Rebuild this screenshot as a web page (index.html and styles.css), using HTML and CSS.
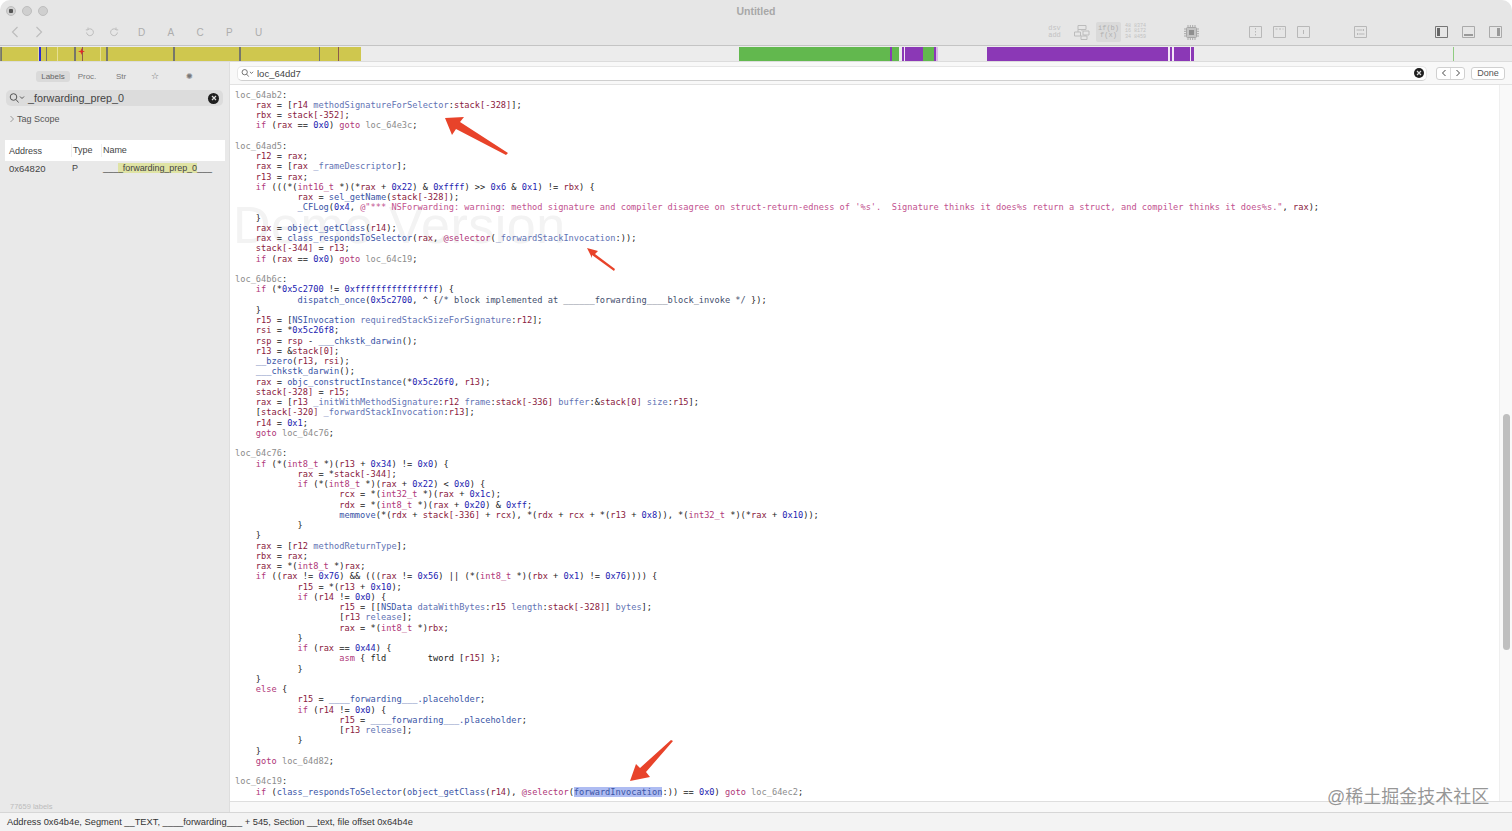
FILE: index.html
```html
<!DOCTYPE html>
<html lang="en">
<head>
  <meta charset="UTF-8">
  <title>Untitled</title>
  <link rel="stylesheet" href="styles.css">
</head>
<body>
<div class="app">
  <div class="titlebar">
    <div class="lights"><i class="light first"></i><i class="light"></i><i class="light"></i></div>
    <div class="title">Untitled</div>
  </div>

  <div class="toolbar">
    <div class="tool nav"><svg width="10" height="12" viewBox="0 0 10 12"><path d="M7.5 1 2.5 6l5 5"/></svg></div>
    <div class="tool nav"><svg width="10" height="12" viewBox="0 0 10 12"><path d="M2.5 1l5 5-5 5"/></svg></div>
    <div class="tool undo"><svg width="10" height="10" viewBox="0 0 10 10"><path d="M3 2.5A3.4 3.4 0 1 1 1.6 5.5M3 .5v2.4H.8"/></svg></div>
    <div class="tool"><svg width="10" height="10" viewBox="0 0 10 10"><path d="M7 2.5A3.4 3.4 0 1 0 8.4 5.5M7 .5v2.4h2.2"/></svg></div>
    <div class="modes">
      <span>D</span><span>A</span><span>C</span><span>P</span><span>U</span>
    </div>
    <div class="tools-right">
      <div class="tool wide small-txt">dsv<br>add</div>
      <div class="tool wide"><svg width="16" height="15" viewBox="0 0 16 15"><path d="M4 .5h8v4H4zM.5 7h6v4h-6zM9 6h6v4H9zM7 11h6v3.500H7zM8 4.500V6M4 4.500V7M11 10v1"/></svg></div>
      <div class="tool wide small-txt active">if(b)<br>f(x)</div>
      <div class="tool wide small-txt hex">48 8374<br>16 8172<br>34 8459</div>
      <div class="tool chip"><svg width="15" height="15" viewBox="0 0 15 15"><path d="M4 0v15M6.300 0v15M8.700 0v15M11 0v15M0 4h15M0 6.300h15M0 8.700h15M0 11h15"/><rect class="body" x="2.500" y="2.500" width="10" height="10" rx="1"/><rect class="core" x="5" y="5" width="5" height="5"/></svg></div>
      <div class="tool box b1"><svg width="13" height="12" viewBox="0 0 13 12"><path d="M.5.500h12v11H.5zM6.500 2v1.500M6.500 5v1.500M6.500 8v1.500"/></svg></div>
      <div class="tool box"><svg width="13" height="12" viewBox="0 0 13 12"><path d="M.5.500h12v11H.5zM2.500 3h2M6 3h2M9.500 3h1"/></svg></div>
      <div class="tool box"><svg width="13" height="12" viewBox="0 0 13 12"><path d="M.5.500h12v11H.5zM6.500 4v4"/></svg></div>
      <div class="tool box b2"><svg width="13" height="12" viewBox="0 0 13 12"><path d="M.5.500h12v11H.5zM2.500 4h6M9.500 3v2M3.500 7v2M4.500 8h6"/></svg></div>
      <div class="tool wide panel on b3"><svg width="13" height="12" viewBox="0 0 13 12"><path d="M.5.500h12v11H.5z"/><rect x="2" y="2" width="3" height="8"/></svg></div>
      <div class="tool wide panel"><svg width="13" height="12" viewBox="0 0 13 12"><path d="M.5.500h12v11H.5z"/><rect x="2" y="8" width="9" height="2"/></svg></div>
      <div class="tool wide panel"><svg width="13" height="12" viewBox="0 0 13 12"><path d="M.5.500h12v11H.5z"/><rect x="8" y="2" width="3" height="8"/></svg></div>
    </div>
  </div>

  <div class="strip">
    <i class="seg g" style="width:1px"></i><i class="seg t" style="width:1px"></i><i class="seg y" style="width:36px"></i><i class="seg l" style="width:1px"></i><i class="seg b" style="width:2px"></i><i class="seg y" style="width:5px"></i><i class="seg t" style="width:1px"></i><i class="seg y" style="width:10px"></i><i class="seg l" style="width:1px"></i><i class="seg y" style="width:16px"></i><i class="seg t" style="width:2px"></i><i class="seg y" style="width:6px"></i><i class="seg r" style="width:1px"></i><i class="seg y" style="width:17px"></i><i class="seg l" style="width:1px"></i><i class="seg y" style="width:5px"></i><i class="seg t" style="width:2px"></i><i class="seg y" style="width:65px"></i><i class="seg t" style="width:2px"></i><i class="seg y" style="width:64px"></i><i class="seg t" style="width:2px"></i><i class="seg y" style="width:78px"></i><i class="seg t" style="width:1px"></i><i class="seg y" style="width:18px"></i><i class="seg r" style="width:1px"></i><i class="seg y" style="width:22px"></i>
    <i class="seg e" style="width:378px"></i>
    <i class="seg gr" style="width:151px"></i><i class="seg p" style="width:2px"></i><i class="seg gr" style="width:7px"></i><i class="seg e" style="width:3px"></i><i class="seg p" style="width:2px"></i><i class="seg w" style="width:1px"></i><i class="seg p" style="width:18px"></i><i class="seg gr" style="width:11px"></i><i class="seg p" style="width:2px"></i><i class="seg lp" style="width:2px"></i>
    <i class="seg e" style="width:49px"></i>
    <i class="seg p" style="width:181px"></i><i class="seg w" style="width:2px"></i><i class="seg p" style="width:2px"></i><i class="seg w" style="width:2px"></i><i class="seg p" style="width:16px"></i><i class="seg w" style="width:1px"></i><i class="seg p" style="width:3px"></i>
    <i class="seg e" style="width:259px"></i><i class="seg lg" style="width:1px"></i>
    <svg class="star" width="7" height="7" viewBox="0 0 7 7"><path d="M3.500 0 4.300 2.700 7 3.500 4.300 4.300 3.500 7 2.700 4.300 0 3.500 2.700 2.700z"/></svg>
  </div>

  <div class="main">
    <aside class="sidebar">
      <div class="tabs">
        <span class="tab on">Labels</span><span class="tab">Proc.</span><span class="tab">Str</span><span class="tab glyph">☆</span><span class="tab">✺</span>
      </div>
      <div class="side-search">
        <svg class="lens" width="16" height="10" viewBox="0 0 16 10"><circle cx="4.500" cy="4" r="3.300"/><path d="M7 6.500 9.500 9.500M11 3.500l2 2 2-2"/></svg>
        <span class="side-query">_forwarding_prep_0</span>
        <span class="clear"><svg width="6" height="6" viewBox="0 0 6 6"><path d="M1 1l4 4M5 1 1 5"/></svg></span>
      </div>
      <div class="scope"><svg width="6" height="8" viewBox="0 0 6 8"><path d="M1.500 1l3 3-3 3"/></svg>Tag Scope</div>
      <div class="label-head">
        <span class="c-addr">Address</span><span class="c-type">Type</span><span class="c-name">Name</span>
      </div>
      <div class="label-row">
        <span class="c-addr">0x64820</span><span class="c-type">P</span><span class="c-name">___<mark>_forwarding_prep_0</mark>___</span>
      </div>
      <div class="label-count">77659 labels</div>
    </aside>

    <section class="content">
      <div class="findbar">
        <div class="find-field">
          <svg class="lens find-lens" width="13" height="8" viewBox="0 0 16 10"><circle cx="4.500" cy="4" r="3.300"/><path d="M7 6.500 9.500 9.500M11 3.500l2 2 2-2"/></svg>
          <span class="find-query">loc_64dd7</span>
          <span class="clear small"><svg width="6" height="6" viewBox="0 0 6 6"><path d="M1 1l4 4M5 1 1 5"/></svg></span>
        </div>
        <div class="stepper">
          <span><svg width="6" height="8" viewBox="0 0 6 8"><path d="M4.500 1l-3 3 3 3"/></svg></span>
          <span><svg width="6" height="8" viewBox="0 0 6 8"><path d="M1.500 1l3 3-3 3"/></svg></span>
        </div>
        <div class="done">Done</div>
      </div>

      <div class="code-wrap">
        <div class="demo">Demo Version</div>
<pre class="code" id="code">loc_64ab2:
    rax = [r14 methodSignatureForSelector:stack[-328]];
    rbx = stack[-352];
    if (rax == 0x0) goto loc_64e3c;

loc_64ad5:
    r12 = rax;
    rax = [rax _frameDescriptor];
    r13 = rax;
    if (((*(int16_t *)(*rax + 0x22) &amp; 0xffff) &gt;&gt; 0x6 &amp; 0x1) != rbx) {
            rax = sel_getName(stack[-328]);
            _CFLog(0x4, @"*** NSForwarding: warning: method signature and compiler disagree on struct-return-edness of '%s'.  Signature thinks it does%s return a struct, and compiler thinks it does%s.", rax);
    }
    rax = object_getClass(r14);
    rax = class_respondsToSelector(rax, @selector(_forwardStackInvocation:));
    stack[-344] = r13;
    if (rax == 0x0) goto loc_64c19;

loc_64b6c:
    if (*0x5c2700 != 0xffffffffffffffff) {
            dispatch_once(0x5c2700, ^ {/* block implemented at ______forwarding____block_invoke */ });
    }
    r15 = [NSInvocation requiredStackSizeForSignature:r12];
    rsi = *0x5c26f8;
    rsp = rsp - ___chkstk_darwin();
    r13 = &amp;stack[0];
    __bzero(r13, rsi);
    ___chkstk_darwin();
    rax = objc_constructInstance(*0x5c26f0, r13);
    stack[-328] = r15;
    rax = [r13 _initWithMethodSignature:r12 frame:stack[-336] buffer:&amp;stack[0] size:r15];
    [stack[-320] _forwardStackInvocation:r13];
    r14 = 0x1;
    goto loc_64c76;

loc_64c76:
    if (*(int8_t *)(r13 + 0x34) != 0x0) {
            rax = *stack[-344];
            if (*(int8_t *)(rax + 0x22) &lt; 0x0) {
                    rcx = *(int32_t *)(rax + 0x1c);
                    rdx = *(int8_t *)(rax + 0x20) &amp; 0xff;
                    memmove(*(rdx + stack[-336] + rcx), *(rdx + rcx + *(r13 + 0x8)), *(int32_t *)(*rax + 0x10));
            }
    }
    rax = [r12 methodReturnType];
    rbx = rax;
    rax = *(int8_t *)rax;
    if ((rax != 0x76) &amp;&amp; (((rax != 0x56) || (*(int8_t *)(rbx + 0x1) != 0x76)))) {
            r15 = *(r13 + 0x10);
            if (r14 != 0x0) {
                    r15 = [[NSData dataWithBytes:r15 length:stack[-328]] bytes];
                    [r13 release];
                    rax = *(int8_t *)rbx;
            }
            if (rax == 0x44) {
                    asm { fld        tword [r15] };
            }
    }
    else {
            r15 = ____forwarding___.placeholder;
            if (r14 != 0x0) {
                    r15 = ____forwarding___.placeholder;
                    [r13 release];
            }
    }
    goto loc_64d82;

loc_64c19:
    if (class_respondsToSelector(object_getClass(r14), @selector(forwardInvocation:)) == 0x0) goto loc_64ec2;</pre>
        <div class="scroll-track"><div class="scroll-thumb"></div></div>
      </div>
      <div class="code-foot"></div>
    </section>
  </div>

  <footer class="status">Address 0x64b4e, Segment __TEXT, ____forwarding___ + 545, Section __text, file offset 0x64b4e</footer>

  <!-- annotations drawn on top of the screenshot -->
  <svg class="arrows" width="1512" height="831" viewBox="0 0 1512 831">
    <path d="M445 118 464 117 460 122 508 153 506 155 456 129 452 135z"/>
    <path d="M587 248 598 251 595 254 615 269 614 271 592 255 592 258z"/>
    <path d="M630 781 650 777 646 772 673 741 671 740 640 768 636 764z"/>
  </svg>
  <div class="mark">@稀土掘金技术社区</div>
</div>
<script src="code.js"></script>
</body>
</html>
```

FILE: styles.css
```css
* {
  box-sizing: border-box;
}
html, body {
  margin: 0;
  height: 100%;
  background: #fff;
  overflow: hidden;
}
.app {
  position: relative;
  display: flex;
  flex-direction: column;
  height: 831px;
  font-family: 'Liberation Sans', Arial, sans-serif;
  color: #333;
  background: #e6e6e6;
  border-radius: 10px 10px 0 0;
  overflow: hidden;
}

/* title + toolbar */
.titlebar {
  position: relative;
  display: flex;
  justify-content: center;
  align-items: center;
  height: 22px;
}
.lights {
  position: absolute;
  left: 6px;
  top: 6px;
  display: flex;
  gap: 6px;
}
.light {
  width: 10px;
  height: 10px;
  border-radius: 50%;
  background: #cfcfcf;
  border: 1px solid #bdbdbd;
}
.light.first {
  background: radial-gradient(circle, #555 0 2px, #d0d0d0 2.5px);
}
.title {
  margin-top: -1px;
  font-size: 10.5px;
  font-weight: bold;
  color: #a8a8a8;
}
.toolbar {
  display: flex;
  align-items: center;
  height: 20px;
  padding: 0 3px;
}
.tool {
  flex: none;
  display: flex;
  justify-content: center;
  align-items: center;
  width: 24px;
  height: 20px;
}
.tool svg {
  fill: none;
  stroke: #bcbcbc;
  stroke-width: 1;
}
.tool.nav svg {
  stroke: #bdbdbd;
  stroke-width: 1.200;
}
.tool.undo {
  margin-left: 27px;
}
.modes {
  display: flex;
  margin-left: 1px;
}
.modes span {
  width: 29.250px;
  text-align: center;
  font-size: 10px;
  color: #adadad;
}
.tools-right {
  display: flex;
  align-items: center;
  margin-left: auto;
}
.tool.wide {
  width: 27px;
}
.small-txt {
  font-family: 'Liberation Mono', monospace;
  font-size: 7px;
  line-height: 7px;
  color: #c2c2c2;
  text-align: center;
}
.tool.active {
  width: 25px;
  height: 20px;
  margin: 0 1px;
  background: #dadada;
  color: #b0b0b0;
  border-radius: 2px;
}
.tool.hex {
  font-size: 5px;
  line-height: 5.500px;
}
.tool.chip {
  margin-left: 30px;
}
.tool.chip svg path {
  stroke: #a8a8a8;
}
.tool.chip svg .body {
  fill: #c4c4c4;
  stroke: #a8a8a8;
}
.tool.chip svg .core {
  fill: #8f8f8f;
  stroke: none;
}
.tool.box svg {
  stroke: #b8b8b8;
}
.b1 {
  margin-left: 40px;
}
.b2 {
  margin-left: 33px;
}
.b3 {
  margin-left: 56px;
}
.panel svg {
  stroke: #aaa;
}
.panel svg rect {
  fill: #999;
  stroke: none;
}
.panel.on svg {
  stroke: #777;
}
.panel.on svg rect {
  fill: #666;
}

/* navigation strip */
.strip {
  position: relative;
  display: flex;
  height: 17px;
  margin-top: 3px;
  padding-top: 1px;
  background: #ececec;
  border-top: 1px solid #c4c4c4;
  border-bottom: 1px solid #dcdcdc;
}
.seg {
  flex: none;
  height: 14px;
}
.y { background: #cfc74e; }
.t { background: #76766a; }
.l { background: #e6df92; }
.b { background: #2a2ad0; }
.r { background: #8c5a4a; }
.g { background: #8a8a70; }
.e { background: #ececec; }
.gr { background: #62b84e; }
.p { background: #8b38b6; }
.lp { background: #d9b8e6; }
.lg { background: #8fcc80; }
.w { background: #f3e6f6; }
.star {
  position: absolute;
  left: 78px;
  top: 2px;
  fill: #e22a2a;
}

/* main area */
.main {
  flex: 1;
  display: flex;
  min-height: 0;
}
.sidebar {
  position: relative;
  flex: none;
  width: 230px;
  background: #e9e9e9;
  border-right: 1px solid #dedede;
}
.tabs {
  display: flex;
  height: 11px;
  margin: 9px 0 0 36px;
  font-size: 8px;
  color: #777;
}
.tab {
  width: 34px;
  line-height: 11px;
  text-align: center;
}
.tab.on {
  background: #dadada;
  border-radius: 3px;
  color: #666;
}
.tab.glyph {
  font-family: 'DejaVu Sans', sans-serif;
  font-size: 9px;
  color: #666;
}
.side-search {
  display: flex;
  align-items: center;
  height: 16px;
  margin: 8px 6px 0;
  padding: 0 5px 0 3px;
  background: #dcdcdc;
  border-radius: 5px;
}
.lens {
  flex: none;
  fill: none;
  stroke: #555;
  stroke-width: 1;
}
.side-query {
  flex: 1;
  margin-left: 3px;
  font-size: 10.800px;
  color: #444;
}
.clear {
  flex: none;
  display: flex;
  justify-content: center;
  align-items: center;
  width: 11px;
  height: 11px;
  margin-right: -1px;
  border-radius: 50%;
  background: #1f1f1f;
}
.clear svg {
  fill: none;
  stroke: #ddd;
  stroke-width: 1.200;
}
.clear.small {
  width: 10px;
  height: 10px;
  margin-right: -2px;
}
.scope {
  display: flex;
  align-items: center;
  gap: 2px;
  height: 12px;
  margin: 7px 0 0 9px;
  font-size: 9px;
  color: #555;
}
.scope svg {
  fill: none;
  stroke: #999;
}
.label-head, .label-row {
  display: flex;
  align-items: center;
  margin-left: 5px;
  width: 220px;
  font-size: 9px;
  color: #444;
}
.label-head {
  height: 21px;
  margin-top: 15px;
  background: #fff;
}
.label-row {
  height: 14px;
}
.c-addr {
  width: 67px;
  padding-left: 4px;
}
.c-type {
  width: 31px;
}
.c-name {
  letter-spacing: -0.05px;
}
.label-head .c-type, .label-head .c-name {
  height: 13px;
  line-height: 13px;
  border-left: 1px solid #eeeeee;
  margin-left: -1px;
  padding-left: 1px;
}
.label-row .c-addr {
  font-size: 9.500px;
}
mark {
  background: #dfe3a4;
  color: inherit;
}
.label-count {
  position: absolute;
  left: 10px;
  bottom: 1px;
  font-size: 7.500px;
  color: #bcbcbc;
}

/* pseudo code */
.content {
  flex: 1;
  display: flex;
  flex-direction: column;
  min-width: 0;
  background: #fff;
}
.findbar {
  flex: none;
  display: flex;
  align-items: center;
  height: 23px;
  padding: 0 7px;
  background: #f8f8f8;
  border-bottom: 1px solid #e2e2e2;
}
.find-field {
  display: flex;
  align-items: center;
  width: 1191px;
  height: 15px;
  padding: 0 4px 0 3px;
  background: #fff;
  border-radius: 5px;
  border: 1px solid #e6e6e6;
  border-bottom-color: #cfcfcf;
}
.find-query {
  flex: 1;
  margin-left: 3px;
  font-size: 9.500px;
  color: #444;
}
.stepper {
  display: flex;
  width: 29px;
  height: 13px;
  margin-left: 9px;
  background: #fff;
  border: 1px solid #d0d0d0;
  border-radius: 3px;
}
.stepper span {
  flex: 1;
  display: flex;
  justify-content: center;
  align-items: center;
}
.stepper span + span {
  border-left: 1px solid #ddd;
}
.stepper svg {
  fill: none;
  stroke: #444;
}
.done {
  width: 34px;
  height: 13px;
  margin-left: 6px;
  font-size: 9px;
  line-height: 11px;
  text-align: center;
  color: #555;
  background: #fff;
  border: 1px solid #d0d0d0;
  border-radius: 3px;
}
.code-wrap {
  position: relative;
  flex: 1;
  min-height: 0;
  overflow: hidden;
}
.demo {
  position: absolute;
  left: 3px;
  top: 112px;
  font-size: 52px;
  line-height: 56px;
  letter-spacing: 0.500px;
  color: #f3f3f3;
  white-space: nowrap;
}
.code {
  position: relative;
  margin: 0;
  padding: 4.500px 0 0 5px;
  font-family: 'DejaVu Sans Mono', monospace;
  font-size: 8.660px;
  line-height: 10.250px;
  color: #222;
}
.line {
  min-height: 10.250px;
}
.scroll-track {
  position: absolute;
  top: 0;
  right: 0;
  bottom: 0;
  width: 13px;
  background: #f9f9f9;
  border-left: 1px solid #efefef;
}
.scroll-thumb {
  width: 7px;
  height: 236px;
  margin: 329px 0 0 3px;
  background: #bfbfbf;
  border-radius: 4px;
}
.code-foot {
  flex: none;
  height: 11px;
  background: #f8f8f8;
  border-top: 1px solid #dedede;
}
.kw { color: #b0387a; }
.rg { color: #8a2040; }
.nm { color: #2222b0; }
.lb { color: #8c8c8c; }
.fn { color: #3a55a6; }
.sl { color: #6273b4; }
.st { color: #c2528f; }
.cm { color: #45506e; }
.hl { background: #aebcf2; }

.status {
  flex: none;
  height: 19px;
  padding-left: 7px;
  font-size: 9.300px;
  line-height: 18px;
  color: #333;
  background: #f3f3f3;
  border-top: 1px solid #d6d6d6;
}

/* overlays */
.arrows {
  position: absolute;
  left: 0;
  top: 0;
  fill: #e8432a;
  pointer-events: none;
}
.mark {
  position: absolute;
  left: 1327px;
  top: 786px;
  font-family: 'Liberation Sans', 'Noto Sans CJK SC', sans-serif;
  font-size: 18px;
  line-height: 22px;
  color: rgba(110, 110, 110, 0.72);
  white-space: nowrap;
}
```

FILE: code.js
```js
// colour the pseudo code, same colours as the hopper view
const KEYWORDS = ["if", "else", "goto", "asm", "int8_t", "int16_t", "int32_t", "@selector"];
const REGS = ["rax", "rbx", "rcx", "rdx", "rsi", "rsp", "r12", "r13", "r14", "r15"];
const PLAIN = ["fld", "tword"];
const SELECTORS = ["methodSignatureForSelector", "_frameDescriptor", "requiredStackSizeForSignature", "_initWithMethodSignature", "frame", "buffer", "size", "_forwardStackInvocation", "methodReturnType", "dataWithBytes", "length", "bytes", "release"];

function esc(s) {
  return s.replace(/&/g, "&amp;").replace(/</g, "&lt;").replace(/>/g, "&gt;");
}

function wrap(cls, s) {
  return `<span class="${cls}">${esc(s)}</span>`;
}

function colour(tok) {
  if (tok[0] === "@" && tok[1] === '"') return wrap("st", tok);
  if (tok.startsWith("/*")) return wrap("cm", tok);
  if (KEYWORDS.includes(tok)) return wrap("kw", tok);
  if (REGS.includes(tok) || tok.startsWith("stack")) return wrap("rg", tok);
  if (tok.startsWith("0x")) return wrap("nm", tok);
  if (tok.startsWith("loc_")) return wrap("lb", tok);
  if (tok === "forwardInvocation") return wrap("fn hl", tok);
  if (SELECTORS.includes(tok)) return wrap("sl", tok);
  if (PLAIN.includes(tok)) return esc(tok);
  return wrap("fn", tok);
}

const tokens = /@"[^"]*"|\/\*.*?\*\/|@selector|stack\[-?\d+\]|0x[0-9a-f]+|[A-Za-z_][\w.]*/g;

function colourLine(line) {
  let html = "";
  let last = 0;
  for (const m of line.matchAll(tokens)) {
    html += esc(line.slice(last, m.index)) + colour(m[0]);
    last = m.index + m[0].length;
  }
  return `<div class="line">${html + esc(line.slice(last))}</div>`;
}

const code = document.getElementById("code");
code.innerHTML = code.textContent.split("\n").map(colourLine).join("");
```
